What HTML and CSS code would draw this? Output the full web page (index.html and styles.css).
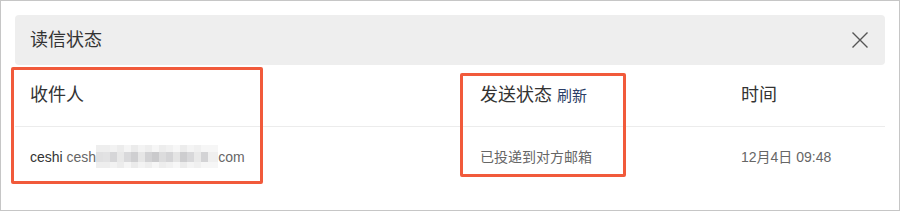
FILE: index.html
```html
<!DOCTYPE html>
<html lang="zh-CN">
<head>
<meta charset="utf-8">
<title>读信状态</title>
<link rel="stylesheet" href="styles.css">
</head>
<body>
<div class="dialog">
  <div class="dlg-head">
    <span class="dlg-title">读信状态</span>
    <svg class="close" width="18" height="18" viewBox="0 0 18 18"><path d="M1.5 1.5 L16.5 16.5 M16.5 1.5 L1.5 16.5" stroke="#555" stroke-width="1.4" fill="none"/></svg>
  </div>
  <div class="table">
    <div class="row head-row">
      <div class="cell">收件人</div>
      <div class="cell">发送状态 <span class="refresh">刷新</span></div>
      <div class="cell">时间</div>
    </div>
    <div class="row body-row">
      <div class="cell"><span class="name">ceshi</span> <span class="mail">cesh<span class="blur"></span>com</span></div>
      <div class="cell muted">已投递到对方邮箱</div>
      <div class="cell muted">12月4日 09:48</div>
    </div>
  </div>
  <div class="mark mark-1"></div>
  <div class="mark mark-2"></div>
</div>
</body>
</html>
```
FILE: styles.css
```css
html, body {
  margin: 0;
  padding: 0;
  background: #fff;
}
body {
  font-family: "Liberation Sans", "Noto Sans CJK SC", sans-serif;
  color: #333;
}
.dialog {
  position: relative;
  box-sizing: border-box;
  width: 900px;
  height: 211px;
  border: 1px solid #c6c6c6;
  padding: 14px;
  background: #fff;
}
.dlg-head {
  height: 50px;
  background: #eeeeee;
  border-radius: 4px;
  display: flex;
  align-items: center;
  justify-content: space-between;
  padding: 0 16px 0 15px;
}
.dlg-title {
  font-size: 18px;
  color: #333;
  padding-bottom: 5px;
}
.close {
  display: block;
}
.table {
  display: flex;
  flex-direction: column;
}
.row {
  display: grid;
  grid-template-columns: 450px 261px 1fr;
  align-items: center;
}
.head-row {
  box-sizing: border-box;
  height: 62px;
  border-bottom: 1px solid #ececec;
  font-size: 18px;
  color: #333;
  padding-bottom: 5px;
}
.body-row {
  height: 58px;
  font-size: 14px;
}
.cell {
  padding-left: 15px;
  white-space: nowrap;
}
.refresh {
  font-size: 15px;
  color: #2b3d66;
}
.name {
  color: #333;
}
.mail {
  color: #666;
}
.muted {
  color: #666;
}
.blur {
  display: inline-block;
  vertical-align: -6px;
  width: 122px;
  height: 23px;
  background:
    linear-gradient(to right,
      #e0e0e1 0 7px, #e2e2e3 7px 14px, #d6d6d8 14px 21px, #e8e8e8 21px 28px,
      #d9d9db 28px 35px, #cfcfd1 35px 42px, #e6e6e6 42px 49px, #d2d2d4 49px 56px,
      #cacacc 56px 63px, #dcdcdd 63px 70px, #d4d4d6 70px 77px, #e4e4e4 77px 84px,
      #cdcdcf 84px 91px, #d8d8da 91px 98px, #e9e9e9 98px 105px, #d3d3d5 105px 112px,
      #efefef 112px 122px) 0 7px / 122px 10px no-repeat,
    linear-gradient(to right,
      #eeeeee 0 7px, #eeeeee 7px 14px, #f2f2f2 14px 21px, #ececec 21px 28px,
      #f5f5f5 28px 35px, #ebebeb 35px 42px, #f3f3f3 42px 49px, #eeeeee 49px 56px,
      #f6f6f6 56px 63px, #ededed 63px 70px, #f1f1f1 70px 77px, #f7f7f7 77px 84px,
      #ececec 84px 91px, #f4f4f4 91px 98px, #f0f0f0 98px 105px, #f6f6f6 105px 122px);
}
.mark {
  position: absolute;
  box-sizing: border-box;
  border: 3px solid #f15a3b;
  border-radius: 2px;
}
.mark-1 {
  left: 10px;
  top: 66px;
  width: 252px;
  height: 117px;
}
.mark-2 {
  left: 459px;
  top: 72px;
  width: 166px;
  height: 104px;
}
```
